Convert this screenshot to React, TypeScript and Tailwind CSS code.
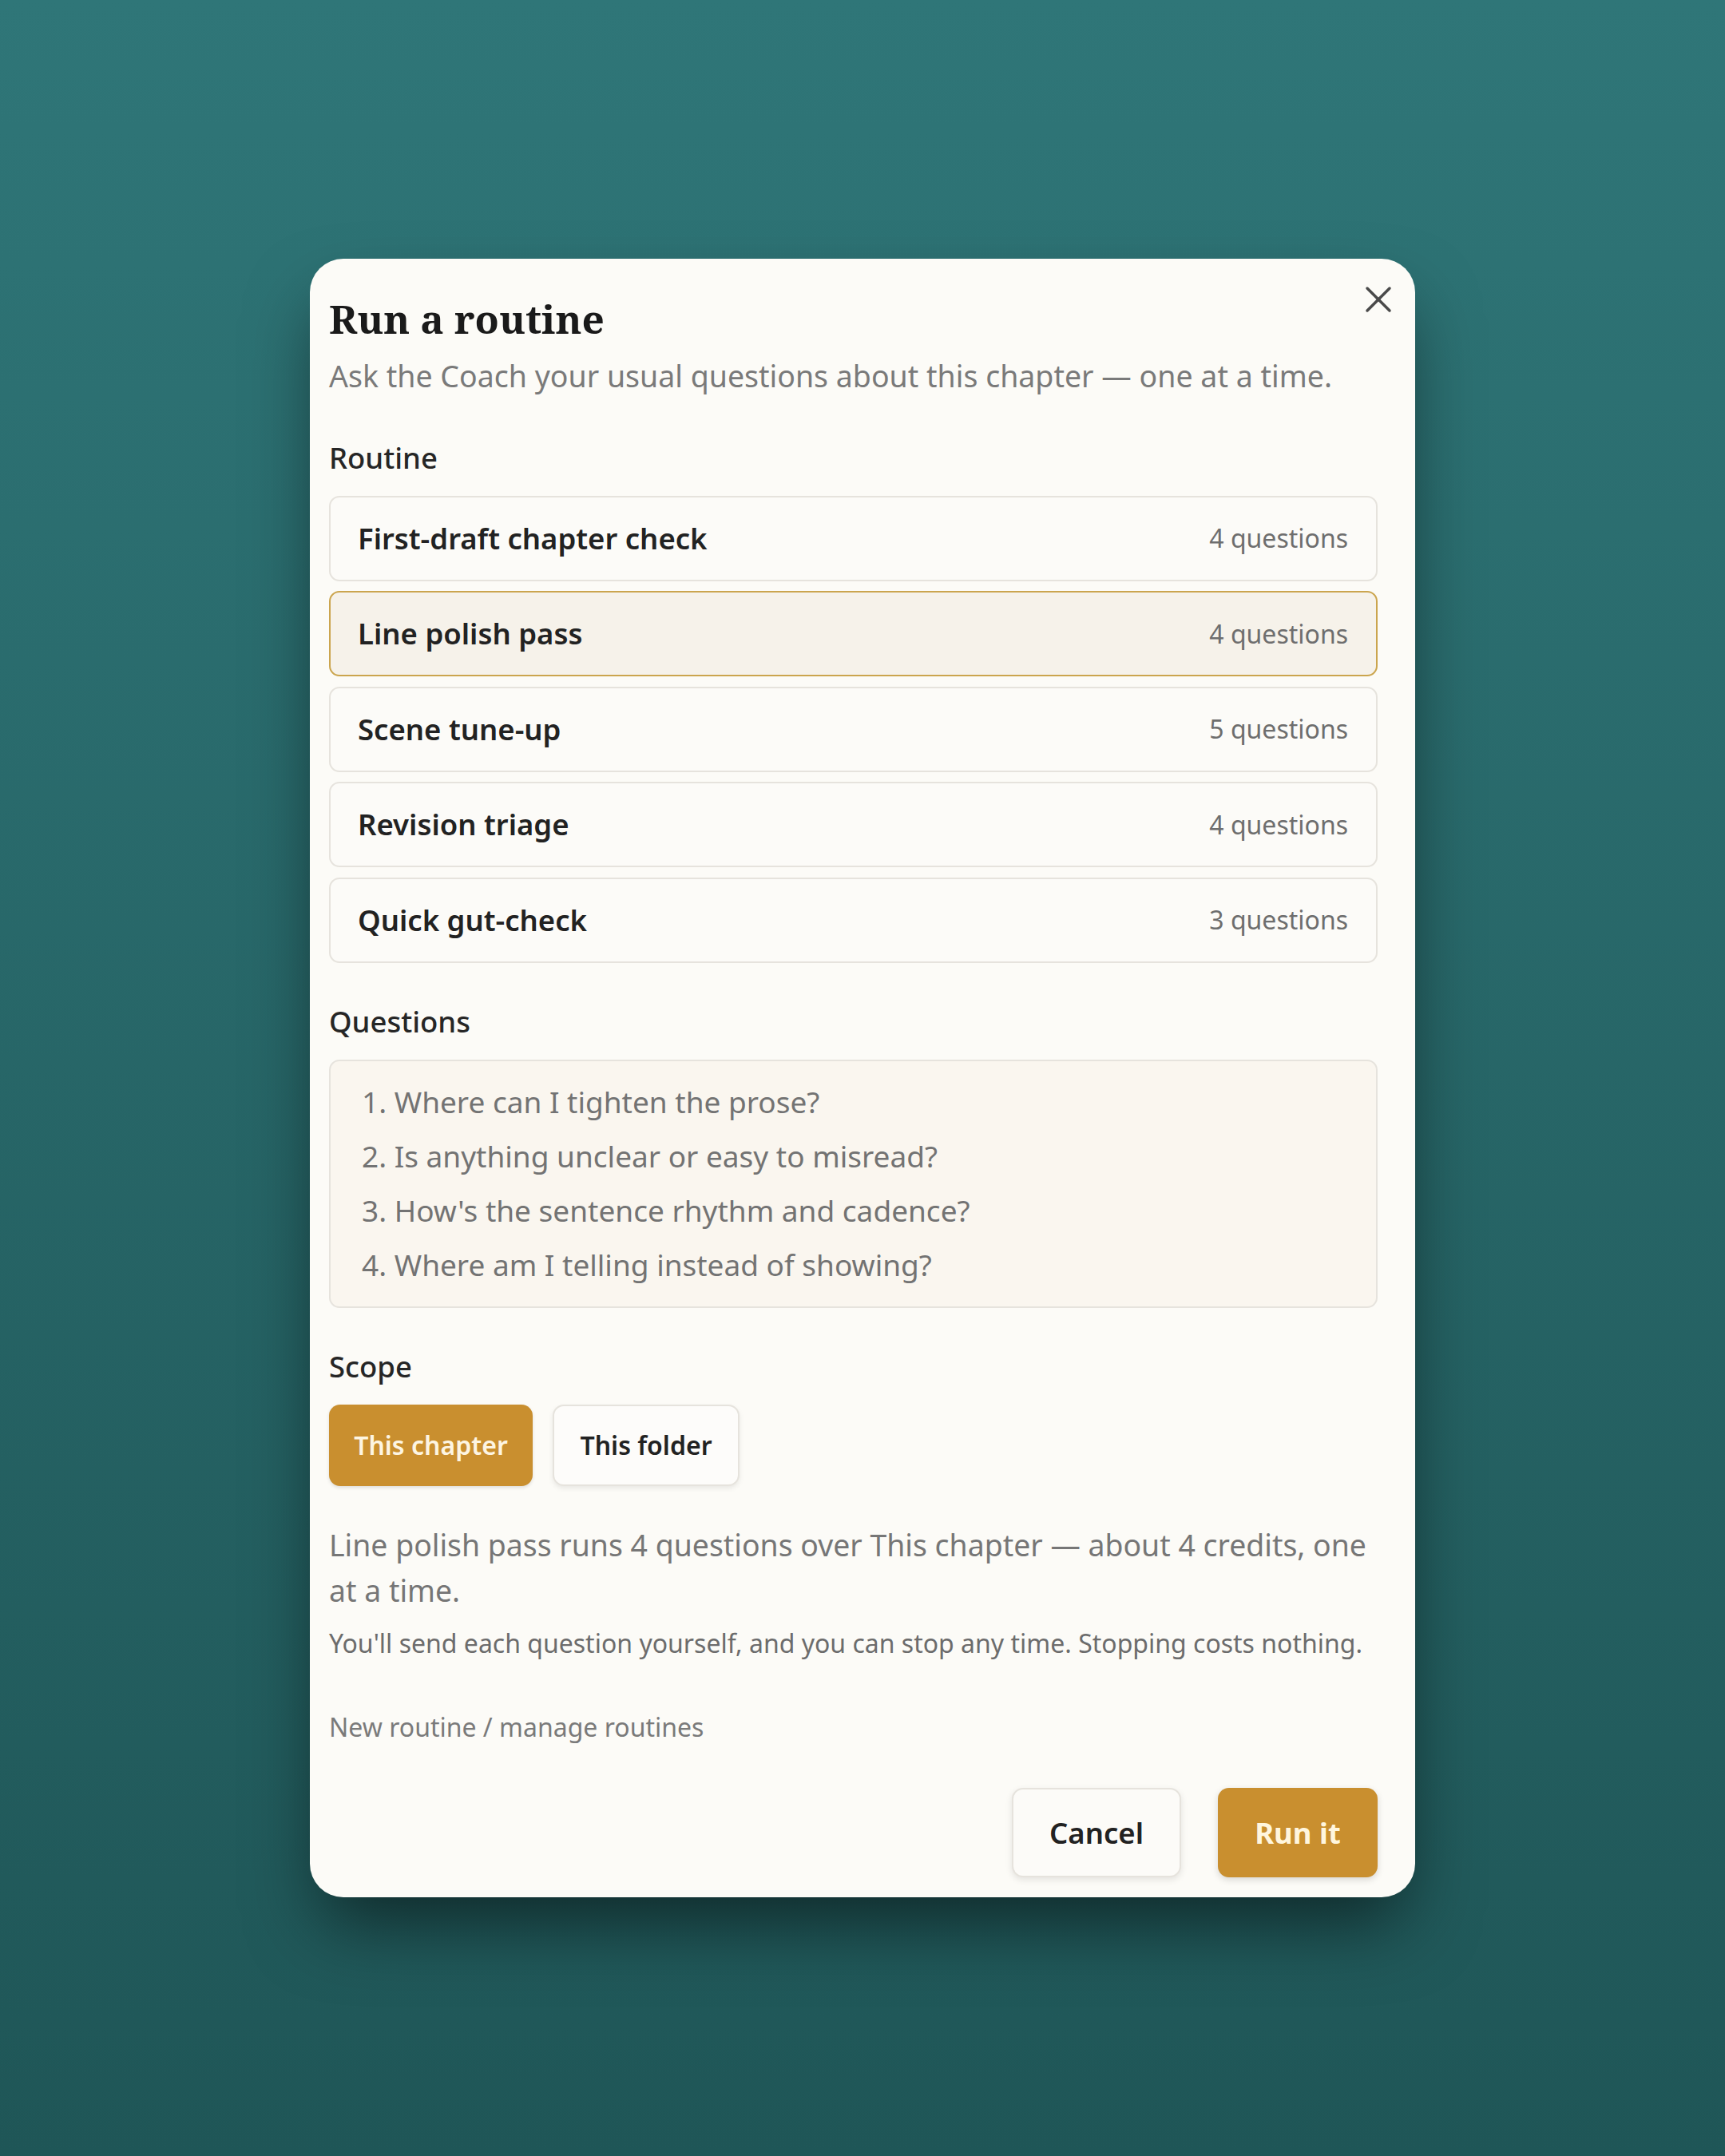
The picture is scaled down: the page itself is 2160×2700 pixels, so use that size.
import { X } from "lucide-react";

const routines = [
  { name: "First-draft chapter check", count: 4 },
  { name: "Line polish pass", count: 4 },
  { name: "Scene tune-up", count: 5 },
  { name: "Revision triage", count: 4 },
  { name: "Quick gut-check", count: 3 },
];

const questions = [
  "Where can I tighten the prose?",
  "Is anything unclear or easy to misread?",
  "How's the sentence rhythm and cadence?",
  "Where am I telling instead of showing?",
];

const selected = "Line polish pass";

function SectionLabel({ children, className = "" }: { children: string; className?: string }) {
  return (
    <div className={`text-[36.5px] leading-[51px] font-medium text-[#262626] ${className}`}>
      {children}
    </div>
  );
}

export default function App() {
  return (
    <div className="min-h-[2700px] w-full flex items-center justify-center bg-gradient-to-b from-[#2f7678] to-[#1f5657] font-['Noto_Sans','Open_Sans',sans-serif]">
      <div className="relative w-[1384px] bg-[#fcfbf7] rounded-[42px] pl-[24px] pr-[47px] pt-[46px] pb-[25px] shadow-[0_45px_90px_-15px_rgba(0,0,0,0.55)]">
        <button className="absolute top-[23px] right-[18px] text-[#4a4a4a]">
          <X className="w-[56px] h-[56px]" strokeWidth={1.5} />
        </button>

        <h2 className="font-['Noto_Serif','Liberation_Serif',serif] font-bold text-[49.5px] leading-[59px] text-[#1a1a1a]">
          Run a routine
        </h2>
        <p className="mt-[16px] text-[37.5px] leading-[52px] text-[#7a7a7a]">
          Ask the Coach your usual questions about this chapter — one at a time.
        </p>

        <SectionLabel className="mt-[51px]">Routine</SectionLabel>
        <div className="mt-[22px] flex flex-col gap-[12.5px]">
          {routines.map((r) => {
            const isActive = r.name === selected;
            return (
              <div
                key={r.name}
                className={`h-[107px] flex items-center justify-between rounded-[13px] border-2 pl-[34px] pr-[35px] ${
                  isActive
                    ? "border-[#cba54e] bg-[#f6f2ea]"
                    : "border-[#e6e3dd] bg-[#fcfbf8]"
                }`}
              >
                <span className="text-[36.5px] font-semibold text-[#222222]">{r.name}</span>
                <span className="text-[32px] text-[#6e6e6e]">{r.count} questions</span>
              </div>
            );
          })}
        </div>

        <SectionLabel className="mt-[48px]">Questions</SectionLabel>
        <ol className="mt-[22px] rounded-[13px] border-2 border-[#e6e3dd] bg-[#faf6ef] pl-[39px] pt-[17px] pb-[18px] text-[37px] leading-[68px] text-[#737373]">
          {questions.map((q, i) => (
            <li key={q}>
              {i + 1}. {q}
            </li>
          ))}
        </ol>

        <SectionLabel className="mt-[48px]">Scope</SectionLabel>
        <div className="mt-[22px] flex gap-[25px]">
          <button className="w-[255px] h-[102px] rounded-[14px] bg-[#c98f2f] text-[32px] font-semibold text-[#fdf5e2] shadow-[0_2px_4px_rgba(0,0,0,0.12)]">
            This chapter
          </button>
          <button className="w-[234px] h-[102px] rounded-[14px] border-2 border-[#e6e3dd] bg-[#fdfcfa] text-[32px] font-semibold text-[#222222] shadow-[0_3px_6px_rgba(0,0,0,0.08)]">
            This folder
          </button>
        </div>

        <p className="mt-[45px] text-[37.4px] leading-[57px] text-[#767676]">
          Line polish pass runs 4 questions over This chapter — about 4 credits, one at a time.
        </p>
        <p className="mt-[14.5px] text-[32px] leading-[48px] text-[#6c6c6c]">
          You'll send each question yourself, and you can stop any time. Stopping costs nothing.
        </p>

        <div className="mt-[57px] text-[32px] leading-[48px] text-[#7a7a7a]">
          New routine / manage routines
        </div>

        <div className="mt-[52px] flex justify-end gap-[46px]">
          <button className="w-[212px] h-[112px] rounded-[14px] border-2 border-[#e6e3dd] bg-[#fcfbf8] text-[36.5px] font-semibold text-[#222222] shadow-[0_3px_8px_rgba(0,0,0,0.1)]">
            Cancel
          </button>
          <button className="w-[200px] h-[112px] rounded-[14px] bg-[#c98f2f] text-[36.5px] font-bold text-[#fff6de] shadow-[0_3px_8px_rgba(0,0,0,0.15)]">
            Run it
          </button>
        </div>
      </div>
    </div>
  );
}
